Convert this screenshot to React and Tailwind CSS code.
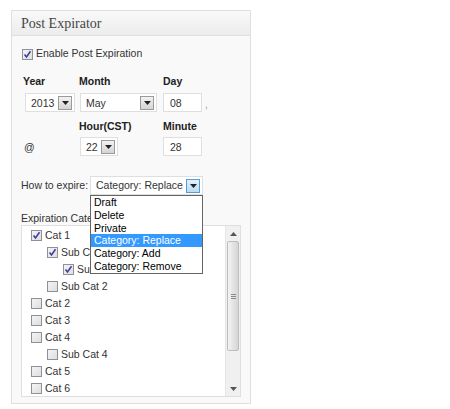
import React from 'react';

const Check = ({ checked }) => (
  <span className="inline-flex items-center justify-center w-[11px] h-[11px] border border-[#8f8f9d] bg-gradient-to-br from-[#f4f4f4] to-[#dedede] shrink-0">
    {checked && (
      <svg width="9" height="9" viewBox="0 0 9 9">
        <path d="M1.5 4.5 L3.5 7 L7.5 1.2" fill="none" stroke="#3f3fa0" strokeWidth="1.6" />
      </svg>
    )}
  </span>
);

const Arrow = ({ active }) => (
  <span
    className={`inline-flex items-center justify-center w-[14px] h-[14px] border ${
      active ? 'border-[#5a9bd0] bg-gradient-to-b from-[#e3f2fc] to-[#b9dcf5]' : 'border-[#9a9a9a] bg-gradient-to-b from-[#f2f2f2] to-[#d4d4d4]'
    }`}
  >
    <svg width="7" height="4" viewBox="0 0 7 4">
      <path d="M0 0 H7 L3.5 4 Z" fill="#222" />
    </svg>
  </span>
);

const Select = ({ value, width, active }) => (
  <div
    className={`flex items-center justify-between h-[19px] bg-white border border-[#dfdfdf] pl-[5px] pr-[2px] ${width}`}
  >
    <span className="whitespace-nowrap">{value}</span>
    <Arrow active={active} />
  </div>
);

const Input = ({ value }) => (
  <div className="w-[39px] h-[19px] bg-white border border-[#dfdfdf] pl-[6px] flex items-center">{value}</div>
);

const cats = [
  { label: 'Cat 1', level: 0, checked: true },
  { label: 'Sub Cat 1', level: 1, checked: true },
  { label: 'Sub Cat 1a', level: 2, checked: true },
  { label: 'Sub Cat 2', level: 1 },
  { label: 'Cat 2', level: 0 },
  { label: 'Cat 3', level: 0 },
  { label: 'Cat 4', level: 0 },
  { label: 'Sub Cat 4', level: 1 },
  { label: 'Cat 5', level: 0 },
  { label: 'Cat 6', level: 0 },
];

const indent = ['pl-[9px]', 'pl-[25px]', 'pl-[41px]'];

const options = ['Draft', 'Delete', 'Private', 'Category: Replace', 'Category: Add', 'Category: Remove'];

export default function App() {
  return (
    <div className="w-[450px] h-[409px] bg-white pt-[10px] pl-[11px] text-[10.5px] text-[#333] font-['Liberation_Sans',Arial,sans-serif]">
      <div className="w-[240px] h-[394px] border border-[#dfdfdf] bg-[#f9f9f9]">
        <div className="h-[25px] border-b border-[#dfdfdf] bg-gradient-to-b from-[#f9f9f9] to-[#ececec] pl-[9px] flex items-center text-[14px] text-[#464646] font-['Liberation_Serif',Georgia,serif]">
          Post Expirator
        </div>
        <div className="pl-[9px] pr-[10px]">
          <div className="flex items-center gap-[3px] mt-[12px] h-[12px] pl-[1px]">
            <Check checked />
            <span className="whitespace-nowrap">Enable Post Expiration</span>
          </div>
          <div className="grid grid-cols-[58px_84px_auto] mt-[14px] leading-[14px]">
            <div className="pl-[2px] font-bold text-[#222]">Year</div>
            <div className="font-bold text-[#222]">Month</div>
            <div className="font-bold text-[#222]">Day</div>
            <div className="pt-[5px] pl-[4px]">
              <Select value="2013" width="w-[50px]" />
            </div>
            <div className="pt-[5px] pl-[1px]">
              <Select value="May" width="w-[77px]" />
            </div>
            <div className="pt-[5px] flex items-end gap-[3px]">
              <Input value="08" />
              <span className="text-[#999] text-[10px]">,</span>
            </div>
            <div className="pt-[7px]" />
            <div className="pt-[7px] font-bold text-[#222]">Hour(CST)</div>
            <div className="pt-[7px] font-bold text-[#222]">Minute</div>
            <div className="pt-[4px] pl-[3px] flex items-end">
              <span className="h-[19px] flex items-center">@</span>
            </div>
            <div className="pt-[4px] pl-[1px]">
              <Select value="22" width="w-[38px]" />
            </div>
            <div className="pt-[4px]">
              <Input value="28" />
            </div>
          </div>
          <div className="flex items-center mt-[20px]">
            <span className="w-[69px] whitespace-nowrap text-[#333]">How to expire:</span>
            <div className="relative">
              <Select value="Category: Replace" width="w-[113px]" active />
              <div className="absolute left-0 top-[19px] w-[113px] bg-white border border-[#646464] z-10 leading-[12.8px] text-black">
                {options.map((o) => (
                  <div
                    key={o}
                    className={`pl-[3px] whitespace-nowrap ${o === 'Category: Replace' ? 'bg-[#3399ff] text-white' : ''}`}
                  >
                    {o}
                  </div>
                ))}
              </div>
            </div>
          </div>
          <div className="mt-[17px] leading-[13px] whitespace-nowrap">Expiration Categories</div>
          <div className="flex h-[172px] w-[220px] border border-[#dfdfdf] bg-white">
            <div className="flex-1 pt-[1px] overflow-hidden">
              {cats.map((c) => (
                <div key={c.label} className={`flex items-center gap-[3px] h-[17px] ${indent[c.level]}`}>
                  <Check checked={c.checked} />
                  <span className="whitespace-nowrap">{c.label}</span>
                </div>
              ))}
            </div>
            <div className="w-[15px] flex flex-col bg-[#f0f0f0] border-l border-[#e6e6e6]">
              <div className="h-[15px] flex items-center justify-center">
                <svg width="7" height="4" viewBox="0 0 7 4">
                  <path d="M0 4 H7 L3.5 0 Z" fill="#555" />
                </svg>
              </div>
              <div className="h-[110px] mx-[1px] border border-[#bdbdbd] rounded-[2px] bg-gradient-to-r from-[#f4f4f4] via-[#e4e4e4] to-[#d6d6d6] flex items-center justify-center">
                <div className="flex flex-col gap-[1px]">
                  <div className="w-[5px] h-[1px] bg-[#8a8a8a]" />
                  <div className="w-[5px] h-[1px] bg-[#8a8a8a]" />
                  <div className="w-[5px] h-[1px] bg-[#8a8a8a]" />
                </div>
              </div>
              <div className="flex-1" />
              <div className="h-[15px] flex items-center justify-center">
                <svg width="7" height="4" viewBox="0 0 7 4">
                  <path d="M0 0 H7 L3.5 4 Z" fill="#555" />
                </svg>
              </div>
            </div>
          </div>
        </div>
      </div>
    </div>
  );
}
